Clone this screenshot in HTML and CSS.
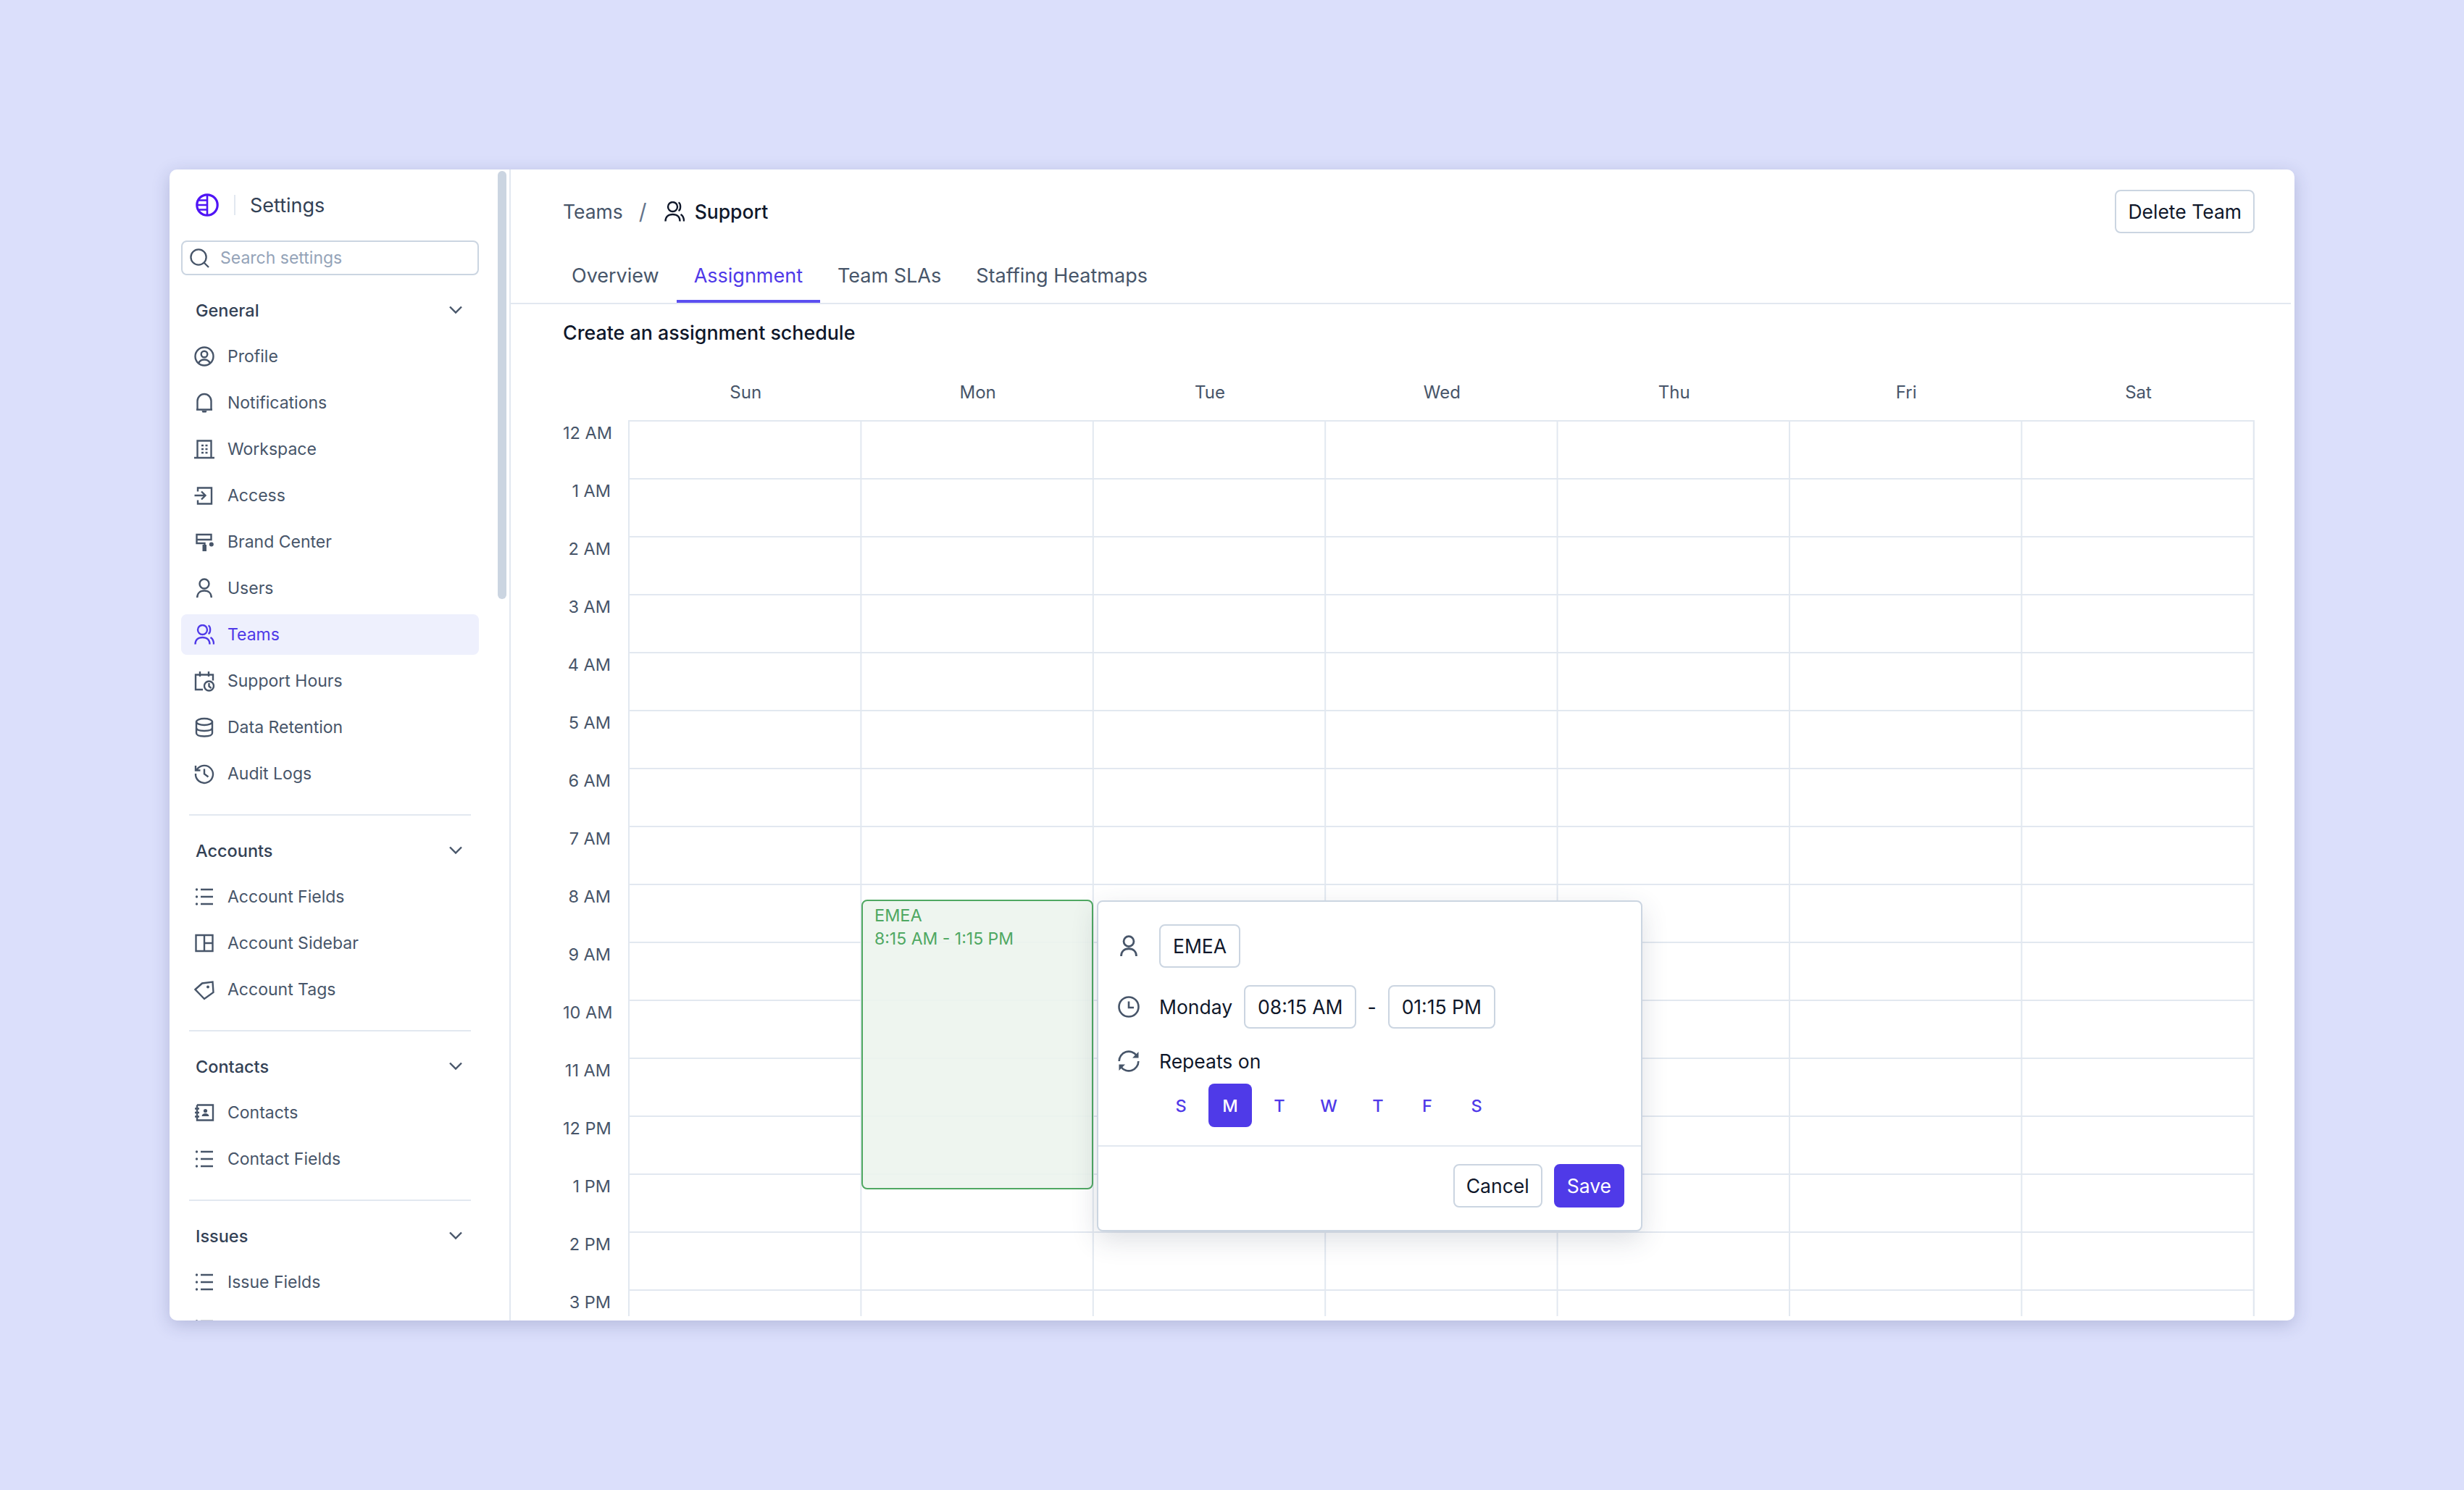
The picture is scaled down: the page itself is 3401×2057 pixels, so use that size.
FILE: index.html
```html
<!DOCTYPE html>
<html lang="en">

<head>
  <meta charset="UTF-8">
  <title>Team Assignment</title>
  <link rel="stylesheet" href="styles.css">
</head>

<body>
  <svg class="sprites" width="0" height="0">
    <symbol id="i-user" viewBox="0 0 28 28"><circle cx="14" cy="8" r="6.500"/><path d="M4.200 27c0-6 4-9.500 9.800-9.500s9.800 3.500 9.800 9.500"/></symbol>
    <symbol id="i-team" viewBox="0 0 28 28"><circle cx="11.500" cy="7.500" r="6.500"/><path d="M1.500 27.500c0-6 4-9.500 10-9.500s10 3.500 10 9.500M19.500 1.500c3.500 1.500 3.500 10 0 11.500M22.500 18c2.800 1.500 4.500 5 4.500 9.500"/></symbol>
    <symbol id="i-list" viewBox="0 0 28 28"><path d="M9 4h17M9 14h17M9 24h17"/><circle class="solid" cx="3.500" cy="4" r="1.700"/><circle class="solid" cx="3.500" cy="14" r="1.700"/><circle class="solid" cx="3.500" cy="24" r="1.700"/></symbol>
    <symbol id="i-chevron" viewBox="0 0 20 20"><path d="M2 5.500l8 8 8-8"/></symbol>
    <symbol id="i-clock" viewBox="0 0 30 30"><circle cx="15" cy="15" r="13.500"/><path d="M15 7.500v8.500h7"/></symbol>
  </svg>

  <div class="window">
    <aside class="sidebar">
      <div class="scroll-thumb"></div>

      <div class="brand">
        <svg class="logo" viewBox="0 0 32 32">
          <circle cx="16" cy="16" r="14.200"/>
          <path class="logo-bars" d="M16 2v28M4 9.500h12M2 16h14M4 22.500h12"/>
        </svg>
        <span class="brand-sep"></span>
        <span class="brand-name">Settings</span>
      </div>

      <div class="search">
        <svg class="search-icon" viewBox="0 0 28 28"><circle cx="12.500" cy="12.500" r="11"/><path d="M20.500 20.500l6.500 6.500"/></svg>
        <span>Search settings</span>
      </div>

      <section class="nav-section">
        <div class="nav-head">General <svg class="chev"><use href="#i-chevron"/></svg></div>
        <a class="nav-item"><svg class="ico" viewBox="0 0 28 28"><circle cx="14" cy="14" r="12.500"/><circle cx="14" cy="11" r="4.300"/><path d="M6 23.500c1.500-3.500 4.500-5 8-5s6.500 1.500 8 5"/></svg>Profile</a>
        <a class="nav-item"><svg class="ico" viewBox="0 0 28 28"><path d="M3 23.500h22M4.500 23.500V11.500a9.500 9.500 0 0 1 19 0v12"/><path class="solid" d="M10.500 25h7l-1 2.500h-5z"/></svg>Notifications</a>
        <a class="nav-item"><svg class="ico" viewBox="0 0 28 28"><path d="M4.500 26V2.500h19V26M0 26h28"/><path class="dots" d="M10 9h3M15.500 9h3M10 14h3M15.500 14h3M10 19h3M15.500 19h3"/></svg>Workspace</a>
        <a class="nav-item"><svg class="ico" viewBox="0 0 28 28"><path d="M5 8.500V3.500h19v22H5v-5M0.500 14h14M10 8.500l5.500 5.500-5.500 5.500"/></svg>Access</a>
        <a class="nav-item"><svg class="ico" viewBox="0 0 28 28"><path d="M3.500 4h20v7h-20zM3.500 11v5h11v3"/><path class="solid" d="M11.500 18h5.500v9h-5.500z"/><circle class="solid" cx="23.800" cy="17.500" r="3"/></svg>Brand Center</a>
        <a class="nav-item"><svg class="ico"><use href="#i-user"/></svg>Users</a>
        <a class="nav-item active"><svg class="ico"><use href="#i-team"/></svg>Teams</a>
        <a class="nav-item"><svg class="ico" viewBox="0 0 28 28"><path d="M12 26H2V5.500h24v8M8 1v7M20 1v7"/><circle cx="20.500" cy="21" r="6.500"/><path d="M20.500 17v4.500l3 2.500"/></svg>Support Hours</a>
        <a class="nav-item"><svg class="ico" viewBox="0 0 28 28"><ellipse cx="14" cy="6.500" rx="11" ry="4.500"/><path d="M3 6.500v15.500c0 3 5 4.500 11 4.500s11-1.500 11-4.500V6.500M3 14.500c0 3 5 4.500 11 4.500s11-1.500 11-4.500"/></svg>Data Retention</a>
        <a class="nav-item"><svg class="ico" viewBox="0 0 28 28"><path d="M3.800 8.500A12 12 0 1 1 2 14M2 3v6.500h6.500M14 7.500v7l5.500 4"/></svg>Audit Logs</a>
      </section>

      <section class="nav-section">
        <div class="nav-head">Accounts <svg class="chev"><use href="#i-chevron"/></svg></div>
        <a class="nav-item"><svg class="ico"><use href="#i-list"/></svg>Account Fields</a>
        <a class="nav-item"><svg class="ico" viewBox="0 0 28 28"><path d="M2.500 3h23v22h-23zM14 3v22M14 14h11.500"/></svg>Account Sidebar</a>
        <a class="nav-item"><svg class="ico" viewBox="0 0 28 28"><path d="M1.500 14L11 5.500 25.500 3.500 26.500 18 14 27z"/><circle class="solid" cx="19" cy="10.500" r="2"/></svg>Account Tags</a>
      </section>

      <section class="nav-section">
        <div class="nav-head">Contacts <svg class="chev"><use href="#i-chevron"/></svg></div>
        <a class="nav-item"><svg class="ico" viewBox="0 0 28 28"><path d="M4 3.500h22v21H4V3.500M1 8.500h6M1 14h6M1 19.500h6"/><circle class="solid" cx="15.500" cy="11.500" r="2.600"/><path class="solid" d="M10.500 19c.5-3 2.500-4 5-4s4.500 1 5 4z"/></svg>Contacts</a>
        <a class="nav-item"><svg class="ico"><use href="#i-list"/></svg>Contact Fields</a>
      </section>

      <section class="nav-section">
        <div class="nav-head">Issues <svg class="chev"><use href="#i-chevron"/></svg></div>
        <a class="nav-item"><svg class="ico"><use href="#i-list"/></svg>Issue Fields</a>
        <a class="nav-item"><svg class="ico"><use href="#i-list"/></svg></a>
      </section>
    </aside>

    <main class="main">
      <header class="topbar">
        <div class="crumbs">
          <span class="crumb-link">Teams</span>
          <span class="crumb-sep">/</span>
          <svg class="crumb-ico"><use href="#i-team"/></svg>
          <span class="crumb-current">Support</span>
        </div>
        <button class="btn">Delete Team</button>
      </header>

      <nav class="tabs">
        <a class="tab">Overview</a>
        <a class="tab active">Assignment</a>
        <a class="tab">Team SLAs</a>
        <a class="tab">Staffing Heatmaps</a>
      </nav>

      <div class="content">
        <h2 class="title">Create an assignment schedule</h2>

        <div class="day-row">
          <span>Sun</span><span>Mon</span><span>Tue</span><span>Wed</span><span>Thu</span><span>Fri</span><span>Sat</span>
        </div>

        <div class="calendar">
          <div class="hours">
            <span>12 AM</span><span>1 AM</span><span>2 AM</span><span>3 AM</span>
            <span>4 AM</span><span>5 AM</span><span>6 AM</span><span>7 AM</span>
            <span>8 AM</span><span>9 AM</span><span>10 AM</span><span>11 AM</span>
            <span>12 PM</span><span>1 PM</span><span>2 PM</span><span>3 PM</span>
          </div>

          <div class="canvas">
            <div class="event">
              <div class="event-name">EMEA</div>
              <div>8:15 AM - 1:15 PM</div>
            </div>

            <div class="popover">
              <div class="pop-body">
                <div class="pop-row">
                  <svg class="pop-ico"><use href="#i-user"/></svg>
                  <div class="field">EMEA</div>
                </div>
                <div class="pop-row">
                  <svg class="pop-ico"><use href="#i-clock"/></svg>
                  <span>Monday</span>
                  <div class="field">08:15 AM</div>
                  <span class="dash">-</span>
                  <div class="field">01:15 PM</div>
                </div>
                <div class="pop-row repeat">
                  <svg class="pop-ico" viewBox="0 0 30 30"><path d="M1.700 15a13.300 13.300 0 0 1 24-8M28.300 15a13.300 13.300 0 0 1-24 8"/><path class="solid" d="M28.500 2v8.500h-8.500zM1.500 28v-8.500h8.500z"/></svg>
                  <span>Repeats on</span>
                </div>
                <div class="weekdays">
                  <span>S</span><span class="on">M</span><span>T</span><span>W</span><span>T</span><span>F</span><span>S</span>
                </div>
              </div>
              <div class="pop-foot">
                <button class="btn">Cancel</button>
                <button class="btn primary">Save</button>
              </div>
            </div>
          </div>
        </div>
      </div>
    </main>
  </div>
</body>

</html>
```

FILE: styles.css
```css
* {
  box-sizing: border-box;
}

body {
  margin: 0;
  height: 2057px;
  padding: 234px;
  overflow: hidden;
  background-color: #dbdffb;
  font-family: Inter, "Noto Sans", sans-serif;
  color: #0f172a;
}

.sprites {
  position: absolute;
}

svg {
  fill: none;
  stroke: currentColor;
  stroke-width: 2.4;
  overflow: visible;
  flex: none;
}

svg .solid {
  fill: currentColor;
  stroke: none;
}

.window {
  display: flex;
  width: 2933px;
  height: 1589px;
  background-color: #fff;
  border-radius: 10px;
  overflow: hidden;
  box-shadow: 0 6px 24px rgba(40, 50, 110, 0.22);
}

/* sidebar */

.sidebar {
  position: relative;
  width: 471px;
  flex: none;
  padding: 0 42px 0 16px;
  border-right: 2px solid #e2e8f0;
  overflow: hidden;
}

.scroll-thumb {
  position: absolute;
  top: 2px;
  left: 453px;
  width: 12px;
  height: 591px;
  border-radius: 6px;
  background-color: #cbd5e1;
}

.brand {
  display: flex;
  align-items: center;
  height: 98px;
  padding-left: 20px;
}

.logo {
  width: 32px;
  height: 32px;
  color: #4f14f5;
  stroke-width: 3.2;
}

.logo-bars {
  stroke-width: 2.6;
}

.brand-sep {
  width: 2px;
  height: 28px;
  margin: 0 20px 0 21px;
  background-color: #e2e8f0;
}

.brand-name {
  font-size: 27px;
  color: #334155;
}

.search {
  display: flex;
  align-items: center;
  gap: 15px;
  height: 48px;
  padding-left: 10px;
  border: 2px solid #cbd5e1;
  border-radius: 8px;
  font-size: 23px;
  color: #94a3b8;
}

.search-icon {
  width: 27px;
  height: 27px;
  color: #475569;
}

.nav-section {
  position: relative;
  display: flex;
  flex-direction: column;
  gap: 8px;
  padding: 20px 0 28px;
  border-bottom: 2px solid #e2e8f0;
  border-image: linear-gradient(to right, transparent 12px, #e2e8f0 12px, #e2e8f0 399px, transparent 399px) 1;
}

.nav-section:last-child {
  border-bottom: 0;
}

.nav-head {
  display: flex;
  align-items: center;
  justify-content: space-between;
  height: 56px;
  padding: 0 22px 0 20px;
  font-size: 23.500px;
  font-weight: 500;
  color: #334155;
}

.chev {
  width: 20px;
  height: 20px;
  color: #475569;
}

.nav-item {
  display: flex;
  align-items: center;
  gap: 18px;
  height: 56px;
  padding-left: 18px;
  border-radius: 8px;
  font-size: 23px;
  color: #475569;
}

.nav-item.active {
  background-color: #eef0fd;
  color: #4f39e8;
}

.ico {
  width: 28px;
  height: 28px;
}

/* main */

.main {
  flex: 1;
  min-width: 0;
  padding-right: 5px;
}

.topbar {
  display: flex;
  align-items: center;
  justify-content: space-between;
  height: 60px;
  margin-top: 28px;
  padding: 0 50px 0 72px;
}

.crumbs {
  display: flex;
  align-items: center;
  font-size: 26.500px;
}

.crumb-link {
  color: #475569;
}

.crumb-sep {
  margin: 0 24px 0 22px;
  font-size: 30px;
  color: #64748b;
}

.crumb-ico {
  width: 28px;
  height: 28px;
  margin-right: 14px;
  color: #0f172a;
}

.crumb-current {
  font-weight: 500;
}

.btn {
  height: 60px;
  padding: 0 16px;
  border: 2px solid #cbd5e1;
  border-radius: 8px;
  background-color: #fff;
  font-family: inherit;
  font-size: 26.500px;
  color: #0f172a;
}

.btn.primary {
  background-color: #4f3ae8;
  border-color: #4f3ae8;
  color: #fff;
}

.tabs {
  display: flex;
  height: 98px;
  padding: 24px 0 0 60px;
  border-bottom: 2px solid #e2e8f0;
}

.tab {
  display: flex;
  align-items: center;
  height: 72px;
  padding: 0 24px;
  border-bottom: 4px solid transparent;
  font-size: 27px;
  color: #475569;
}

.tab.active {
  border-bottom-color: #5b4ff0;
  color: #4f39e8;
}

.content {
  padding: 21px 0 0 72px;
}

.title {
  margin: 0;
  font-size: 26.800px;
  font-weight: 500;
  line-height: 36px;
}

.day-row {
  display: grid;
  grid-template-columns: repeat(7, 320.4px);
  margin: 47px 0 20px 92px;
  font-size: 24px;
  line-height: 36px;
  color: #475569;
  text-align: center;
}

.calendar {
  display: flex;
  height: 1237px;
  overflow: hidden;
}

.hours {
  display: flex;
  flex-direction: column;
  width: 90px;
  flex: none;
  padding-right: 24px;
  font-size: 23.500px;
  line-height: 36px;
  color: #475569;
  text-align: right;
  white-space: nowrap;
}

.hours span {
  flex: none;
  height: 80px;
}

.canvas {
  position: relative;
  width: 2245px;
  background-image:
    linear-gradient(to bottom, #e2e8f0 2px, transparent 2px),
    linear-gradient(to right, #e2e8f0 2px, transparent 2px);
  background-size: 320.4px 80px;
  border-right: 2px solid #e2e8f0;
}

.event {
  position: absolute;
  top: 662px;
  left: 322px;
  width: 320px;
  height: 400px;
  padding: 4px 16px;
  border: 2px solid #4fa862;
  border-radius: 8px;
  background-color: rgba(236, 244, 237, 0.88);
  font-size: 23px;
  line-height: 32px;
  color: #4fa862;
}

.event-name {
  font-size: 23.500px;
}

.popover {
  position: absolute;
  top: 663px;
  left: 647px;
  width: 753px;
  border: 2px solid #cbd5e1;
  border-radius: 8px;
  background-color: #fff;
  font-size: 26.500px;
  box-shadow: 0 12px 36px rgba(51, 65, 85, 0.16);
}

.pop-body {
  display: flex;
  flex-direction: column;
  gap: 24px;
  padding: 31px 27px 25px;
  border-bottom: 2px solid #e2e8f0;
}

.pop-row {
  display: flex;
  align-items: center;
  height: 60px;
}

.pop-ico {
  width: 30px;
  height: 30px;
  margin-right: 27px;
  color: #475569;
  stroke-width: 2.6;
}

.field {
  display: flex;
  align-items: center;
  height: 60px;
  padding: 0 17px;
  border: 2px solid #cbd5e1;
  border-radius: 8px;
}

.pop-row span + .field {
  margin-left: 16px;
}

.pop-row .dash {
  margin-left: 15px;
}

.pop-row .dash + .field {
  margin-left: 16px;
}

.pop-row.repeat {
  height: 36px;
  margin-top: 3px;
}

.weekdays {
  display: flex;
  gap: 8px;
  margin: -11px 0 0 57px;
}

.weekdays span {
  display: flex;
  align-items: center;
  justify-content: center;
  width: 60px;
  height: 60px;
  border-radius: 8px;
  font-size: 23.500px;
  font-weight: 500;
  color: #4f39e8;
}

.weekdays .on {
  background-color: #4f3ae8;
  color: #fff;
}

.pop-foot {
  display: flex;
  justify-content: flex-end;
  gap: 16px;
  padding: 24px 23px 31px;
}
```
